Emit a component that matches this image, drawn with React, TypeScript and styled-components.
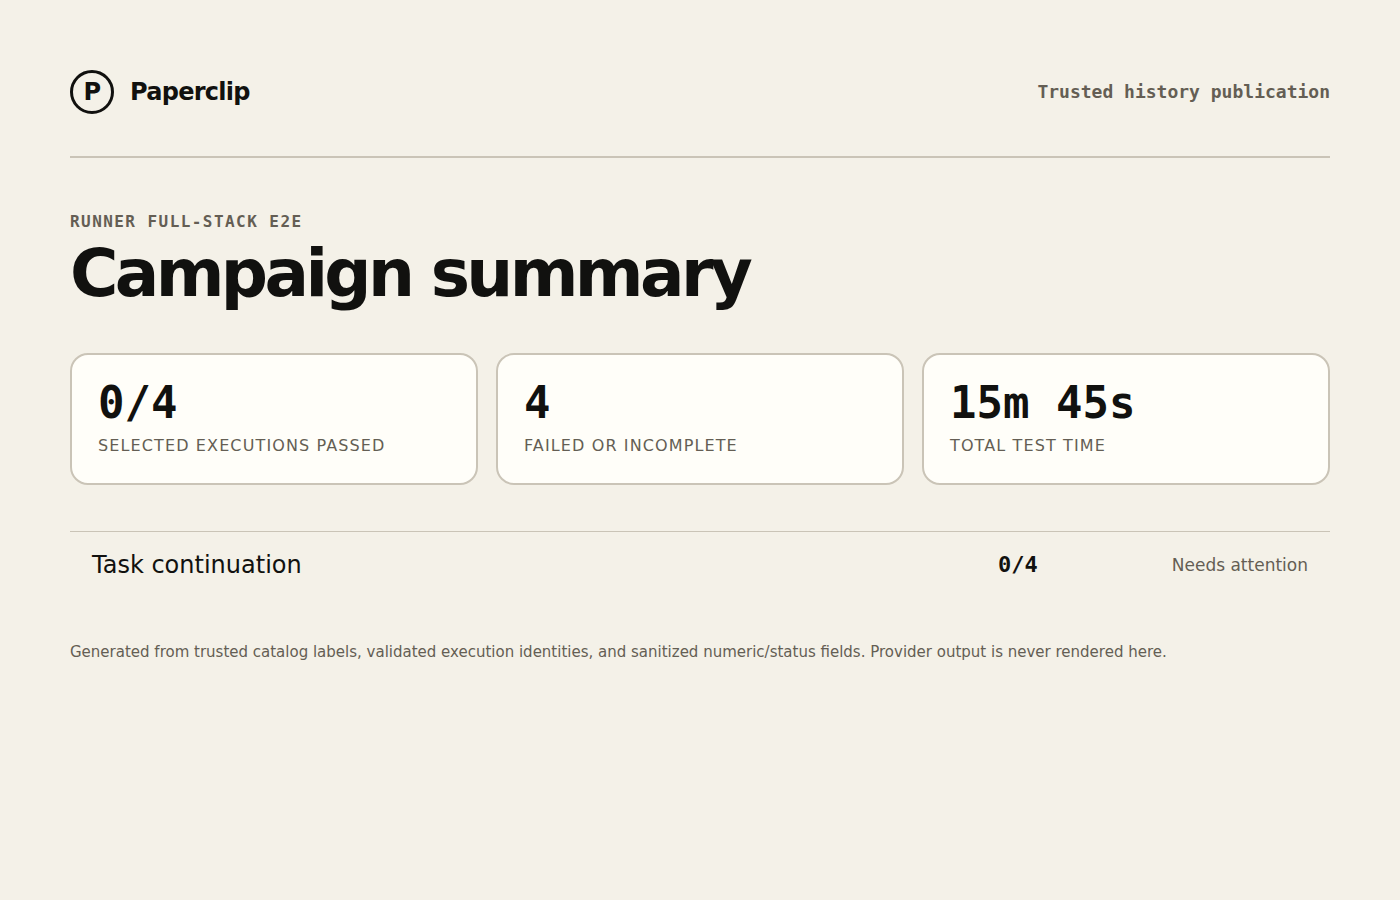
import React from "react";
import styled, { createGlobalStyle } from "styled-components";

const GlobalStyle = createGlobalStyle`
  * { box-sizing: border-box; }
  body {
    margin: 0;
    background: #f4f1e8;
    color: #11110f;
    font-family: "DejaVu Sans", sans-serif;
  }
`;

const mono = `"DejaVu Sans Mono", monospace`;
const muted = "#645e54";
const line = "#cac4b7";

const Page = styled.main`
  padding: 70px;
`;

const Header = styled.header`
  display: flex;
  align-items: center;
  justify-content: space-between;
  padding-bottom: 42px;
  border-bottom: 2px solid ${line};
`;

const Brand = styled.div`
  display: flex;
  align-items: center;
  gap: 16px;
  font-size: 24px;
  font-weight: 700;
  letter-spacing: -0.03em;
`;

const Mark = styled.span`
  display: grid;
  place-items: center;
  width: 44px;
  height: 44px;
  border: 3px solid #11110f;
  border-radius: 50%;
`;

const Tagline = styled.div`
  font: 700 18px/22px ${mono};
  color: ${muted};
`;

const Eyebrow = styled.p`
  margin: 54px 0 0;
  font: 700 16px/20px ${mono};
  letter-spacing: 0.09em;
  text-transform: uppercase;
  color: ${muted};
`;

const Title = styled.h1`
  margin: 9px 0 46px;
  font-size: 66px;
  line-height: 66px;
  font-weight: 700;
  letter-spacing: -0.055em;
`;

const Stats = styled.section`
  display: grid;
  grid-template-columns: repeat(3, 1fr);
  gap: 18px;
`;

const Card = styled.article`
  padding: 26px;
  border: 2px solid ${line};
  border-radius: 18px;
  background: #fffef9;
`;

const Value = styled.strong`
  display: block;
  font: 700 44px/44px ${mono};
`;

const Label = styled.span`
  display: block;
  margin-top: 10px;
  font-size: 16px;
  line-height: 22px;
  letter-spacing: 0.07em;
  text-transform: uppercase;
  color: ${muted};
`;

const Results = styled.table`
  width: 100%;
  margin-top: 46px;
  border-collapse: separate;
  border-spacing: 0;
  border-top: 1px solid ${line};
`;

const Cell = styled.td`
  padding: 18px 22px;
  font-size: 24px;
  line-height: 30px;
`;

const Score = styled(Cell)`
  width: 170px;
  font: 700 22px/30px ${mono};
`;

const Status = styled(Cell)`
  width: 184px;
  font-size: 17px;
  text-align: right;
  white-space: nowrap;
  color: ${muted};
`;

const Footer = styled.footer`
  margin-top: 44px;
  font-size: 15px;
  line-height: 20px;
  color: ${muted};
`;

const stats = [
  { value: "0/4", label: "Selected executions passed" },
  { value: "4", label: "Failed or incomplete" },
  { value: "15m 45s", label: "Total test time" },
];

export default function App() {
  return (
    <>
      <GlobalStyle />
      <Page>
        <Header>
          <Brand>
            <Mark>P</Mark>
            <span>Paperclip</span>
          </Brand>
          <Tagline>Trusted history publication</Tagline>
        </Header>
        <Eyebrow>Runner full-stack E2E</Eyebrow>
        <Title>Campaign summary</Title>
        <Stats>
          {stats.map((stat) => (
            <Card key={stat.label}>
              <Value>{stat.value}</Value>
              <Label>{stat.label}</Label>
            </Card>
          ))}
        </Stats>
        <Results>
          <tbody>
            <tr>
              <Cell>Task continuation</Cell>
              <Score>0/4</Score>
              <Status>Needs attention</Status>
            </tr>
          </tbody>
        </Results>
        <Footer>
          Generated from trusted catalog labels, validated execution identities, and sanitized
          numeric/status fields. Provider output is never rendered here.
        </Footer>
      </Page>
    </>
  );
}
